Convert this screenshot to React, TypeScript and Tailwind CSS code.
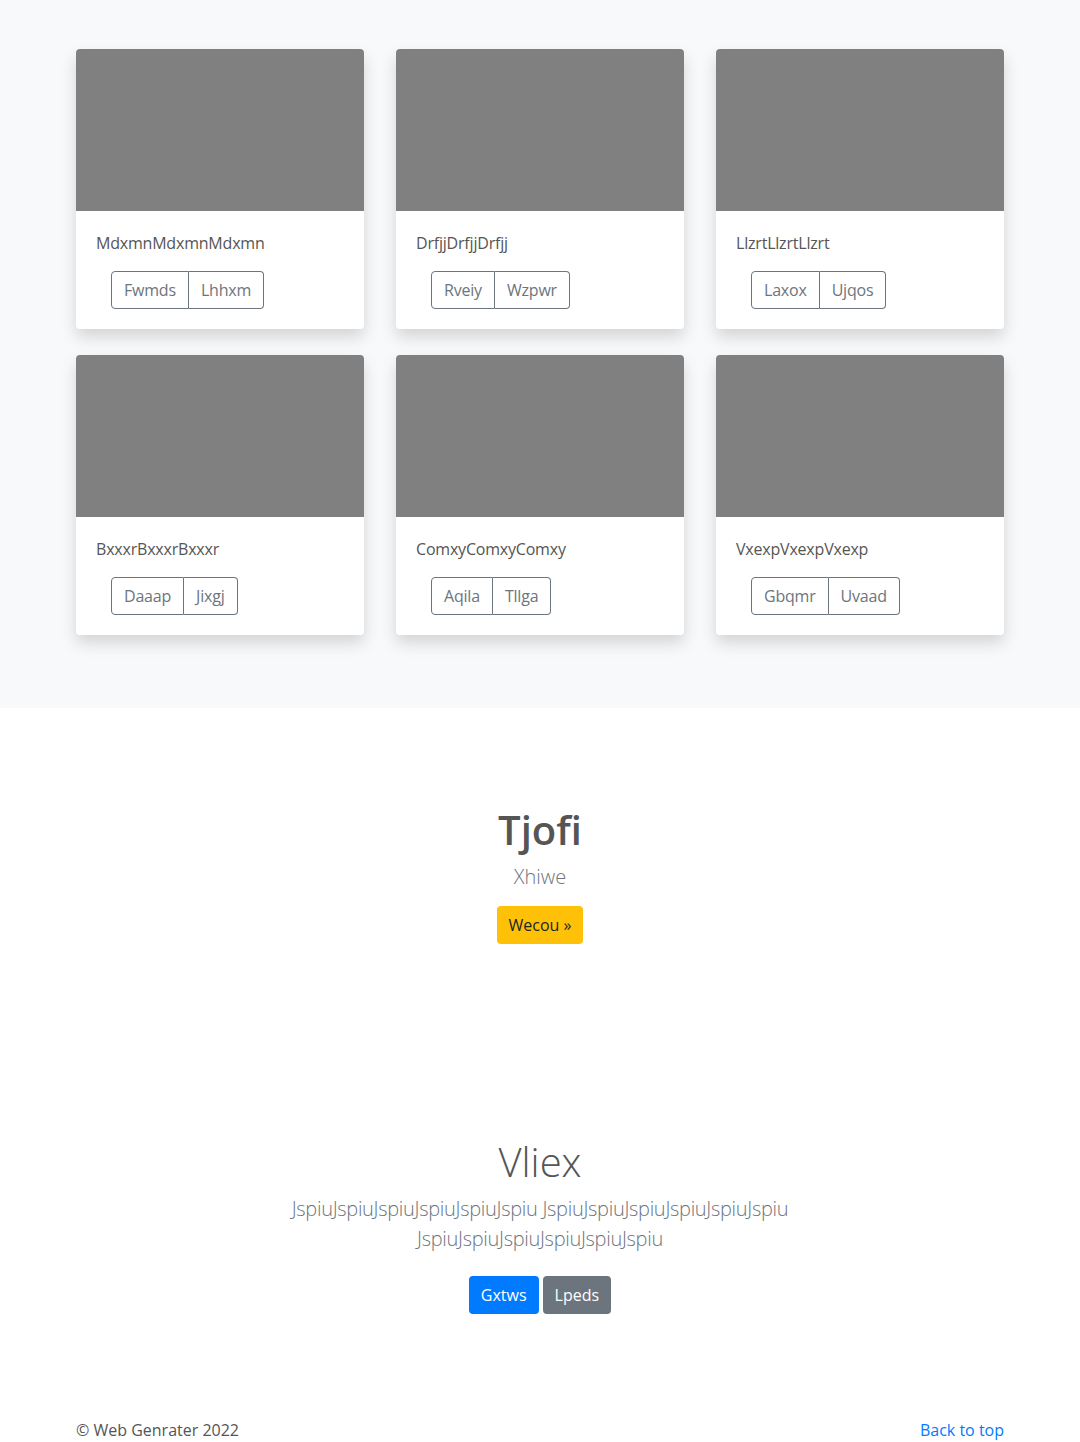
const CARDS = [
  { title: 'MdxmnMdxmnMdxmn', buttons: ['Fwmds', 'Lhhxm'] },
  { title: 'DrfjjDrfjjDrfjj', buttons: ['Rveiy', 'Wzpwr'] },
  { title: 'LlzrtLlzrtLlzrt', buttons: ['Laxox', 'Ujqos'] },
  { title: 'BxxxrBxxxrBxxxr', buttons: ['Daaap', 'Jixgj'] },
  { title: 'ComxyComxyComxy', buttons: ['Aqila', 'Tllga'] },
  { title: 'VxexpVxexpVxexp', buttons: ['Gbqmr', 'Uvaad'] },
];

const LEAD = 'JspiuJspiuJspiuJspiuJspiuJspiu JspiuJspiuJspiuJspiuJspiuJspiu JspiuJspiuJspiuJspiuJspiuJspiu';

export default function App() {
  return (
    <div className="min-h-screen bg-white text-[16px] leading-6 text-[#212529] font-['Open_Sans','Noto_Sans',sans-serif]">
      {/* Album */}
      <section className="bg-[#f8f9fa] pt-[49px] pb-[73px]">
        <div className="mx-auto grid w-[960px] grid-cols-3 gap-x-8 gap-y-[26px] px-4">
          {CARDS.map((c) => (
            <div key={c.title} className="overflow-hidden rounded bg-white shadow-[0_8px_16px_rgba(0,0,0,0.15)]">
              <div className="h-[162px] bg-[#808080]" />
              <div className="p-5">
                <p className="mb-4 tracking-[-0.2px] text-[#555]">{c.title}</p>
                <div className="ml-[15px] inline-flex">
                  {c.buttons.map((b, i) => (
                    <button
                      key={b}
                      className={
                        i === 0
                          ? 'h-[38px] rounded-l border border-[#6c757d] px-3 tracking-[-0.2px] text-[#6c757d]'
                          : 'h-[38px] rounded-r border border-l-0 border-[#6c757d] px-3 tracking-[-0.2px] text-[#6c757d]'
                      }
                    >
                      {b}
                    </button>
                  ))}
                </div>
              </div>
            </div>
          ))}
        </div>
      </section>

      {/* Hero */}
      <section className="pt-[98px] pb-[98px] text-center">
        <h1 className="mb-2 text-[40px] font-semibold leading-[48px] text-[#555]">Tjofi</h1>
        <p className="mb-[14px] text-[20px] font-light leading-[30px] text-[#6c757d]">Xhiwe</p>
        <button className="h-[38px] rounded bg-[#ffc107] px-3 text-[#212529]">Wecou »</button>
      </section>

      {/* Second jumbotron */}
      <section className="pt-[96px] text-center">
        <h1 className="mb-2 text-[40px] font-light leading-[48px] text-[#555]">Vliex</h1>
        <p className="mx-auto mb-[22px] max-w-[640px] text-[20px] font-light leading-[30px] tracking-[-0.3px] text-[#6c757d]">{LEAD}</p>
        <div className="flex justify-center gap-1">
          <button className="h-[38px] rounded bg-[#007bff] px-3 text-white">Gxtws</button>
          <button className="h-[38px] rounded bg-[#6c757d] px-3 text-white">Lpeds</button>
        </div>
      </section>

      {/* Footer */}
      <footer className="mx-auto flex w-[960px] items-center justify-between px-4 pt-[104px] text-[#555]">
        <p>© Web Genrater 2022</p>
        <a href="#" className="text-[#007bff]">Back to top</a>
      </footer>
    </div>
  );
}
